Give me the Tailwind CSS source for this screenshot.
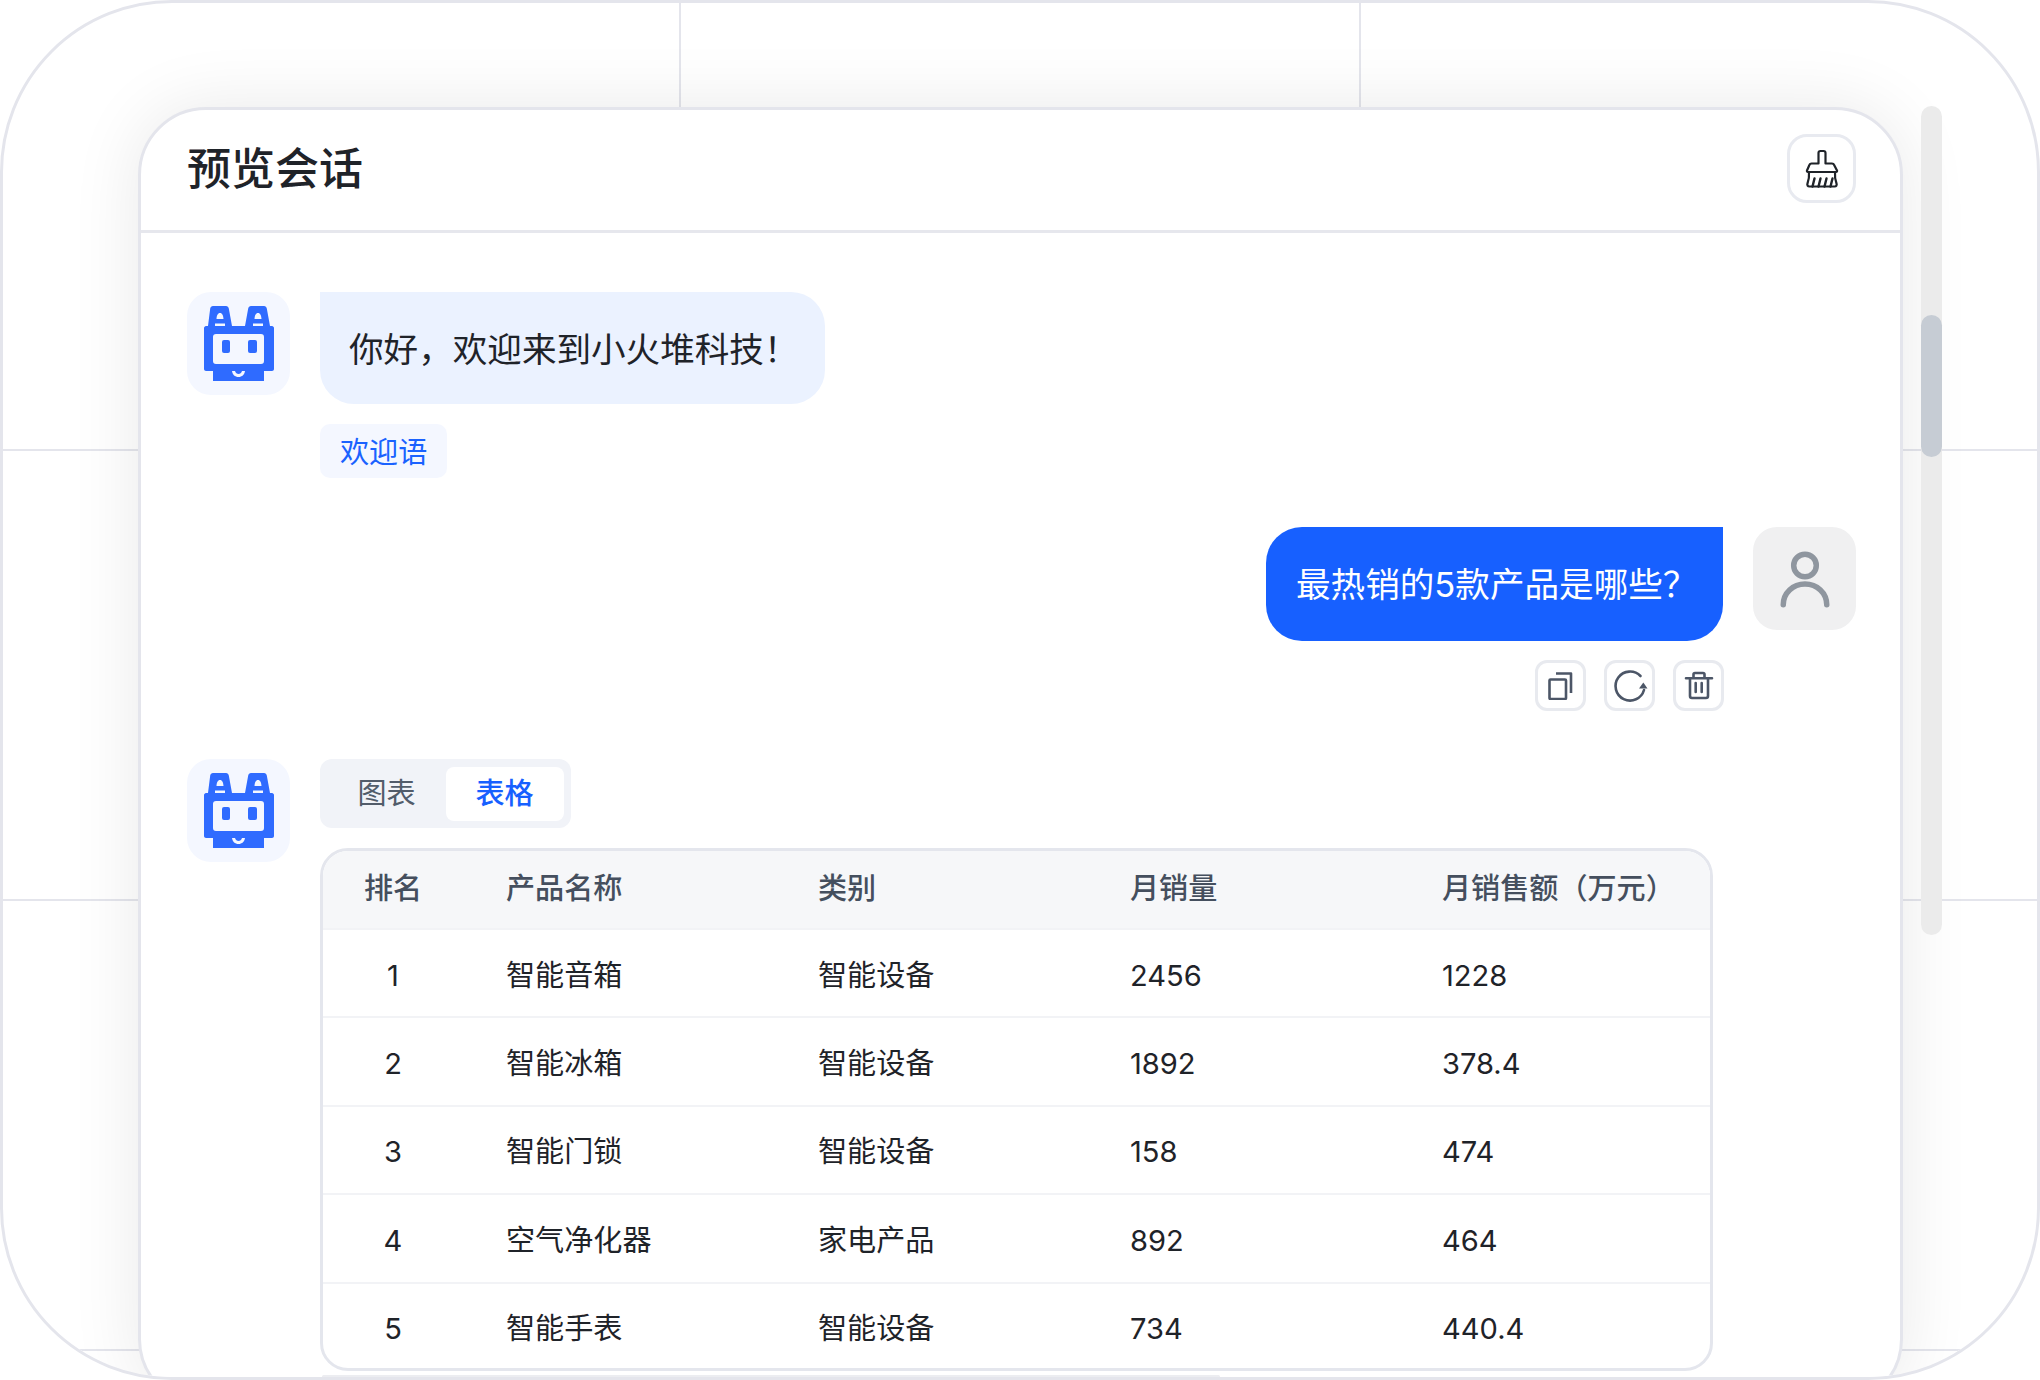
<!DOCTYPE html>
<html><head><meta charset="utf-8"><script src="https://cdn.jsdelivr.net/npm/@tailwindcss/browser@4"></script></head>
<body class="m-0 bg-white">
<div class="relative w-[2040px] h-[1380px] overflow-hidden rounded-[172px] border-[3px] border-[#e4e5ec] bg-white font-['Inter','Noto_Sans_CJK_SC',sans-serif] text-[#1f2329]">
  <div class="absolute left-[-2px] top-[-2px] grid grid-cols-[680px_680px_680px] grid-rows-[450px_450px_450px_30px]">
    <div class="border-r-2 border-b-2 border-[#e4e5ec]"></div><div class="border-r-2 border-b-2 border-[#e4e5ec]"></div><div class="border-b-2 border-[#e4e5ec]"></div>
    <div class="border-r-2 border-b-2 border-[#e4e5ec]"></div><div class="border-r-2 border-b-2 border-[#e4e5ec]"></div><div class="border-b-2 border-[#e4e5ec]"></div>
    <div class="border-r-2 border-b-2 border-[#e4e5ec]"></div><div class="border-r-2 border-b-2 border-[#e4e5ec]"></div><div class="border-b-2 border-[#e4e5ec]"></div>
  </div>
  <div class="absolute left-[135px] top-[104px] h-[1300px] w-[1765px] rounded-[68px] border-[3px] border-[#e4e5ec] bg-white shadow-[0_0_70px_rgba(0,0,0,0.09)]">
    <div class="flex h-[123px] items-center justify-between border-b-[3px] border-[#e6e7ed] pb-[3px] pl-[46px] pr-[44px]">
      <div class="text-[44px] leading-none font-medium text-[#1f2329]">预览会话</div>
      <div class="flex h-[69px] w-[69px] items-center justify-center rounded-[20px] border-[3px] border-[#e8eaf0]">
        <svg class="h-[40px] w-[36px]" viewBox="-2 -1.500 36 40" fill="none" stroke="#1f2329" stroke-width="2.200" stroke-linecap="round" stroke-linejoin="round"><path d="M12.500 13V2.500C12.500 1.200 13.500.5 14.500.5h3c1 0 2 .7 2 2V13h6.500c1 0 1.700.4 2 1.200L31 20c.3.8 0 1.500-1 1.500H2c-1 0-1.300-.7-1-1.500l2.500-5.800c.3-.8 1-1.200 2-1.200Z"/><path d="M3 21.500c.3 4-.2 8-1.500 11.500-.6 1.600.3 3 1.800 3h25.400c1.500 0 2.400-1.400 1.800-3-1.300-3.500-1.800-7.500-1.500-11.500"/><path d="M8.500 28l-2 8M14.500 28l-2 8M20.500 28l-2 8M26.500 28l-2 8" stroke-width="2.400"/></svg>
      </div>
    </div>
    <div class="flex flex-col pl-[46px] pr-[44px] pt-[59px]">
      <div class="flex gap-[30px]">
        <div class="flex h-[103px] w-[103px] shrink-0 items-center justify-center rounded-[24px] bg-[#f4f7ff]">
          <svg class="h-[75px] w-[70px]" viewBox="0 0 70 75" fill="#2f6bff" fill-rule="evenodd"><path d="M9 0h13c1.500 0 2.500 1 2.800 2.500L28 20h13l3.200-17.500C44.500 1 45.500 0 47 0h13c1.500 0 2.500 1 2.800 2.500L66 20h2c1 0 2 1 2 2v41c0 1-1 2-2 2h-8v10H9V65H2c-1 0-2-1-2-2V22c0-1 1-2 2-2h2L6.200 2.500C6.500 1 7.500 0 9 0ZM12 28a3 3 0 0 0-3 3v24a3 3 0 0 0 3 3h45a3 3 0 0 0 3-3V31a3 3 0 0 0-3-3ZM20 34a2 2 0 0 0-2 2v9a2 2 0 0 0 2 2h4a2 2 0 0 0 2-2v-9a2 2 0 0 0-2-2Zm26 0a2 2 0 0 0-2 2v9a2 2 0 0 0 2 2h5a2 2 0 0 0 2-2v-9a2 2 0 0 0-2-2Z"/><path fill="#f4f7ff" d="M12.500 13c.2-3.500 1.300-6 3.500-6s3.300 2.500 3.500 6ZM50.500 13c.2-3.500 1.300-6 3.500-6s3.300 2.500 3.500 6ZM11 17.500h10V20H11ZM49 17.500h10V20H49ZM28 65h3c.5 2 2 3 3.500 3s3-1 3.500-3h3c-.5 3.800-3 6-6.500 6S28.500 68.800 28 65Z"/></svg>
        </div>
        <div class="flex flex-col items-start gap-[20px]">
          <div class="flex h-[112px] w-[505px] items-center rounded-[34px] rounded-tl-none bg-[#ebf2ff] pl-[29px] pt-[3px] text-[34.600px]">你好，欢迎来到小火堆科技！</div>
          <div class="flex h-[54px] items-center rounded-[10px] bg-[#f4f7ff] px-[20px] pt-[3px] text-[29.100px] text-[#1a62ff]">欢迎语</div>
        </div>
      </div>
      <div class="mt-[49px] flex justify-end gap-[30px]">
        <div class="flex flex-col items-end gap-[19px]">
          <div class="flex h-[114px] w-[457px] items-center rounded-[36px] rounded-tr-none bg-[#1760ff] pl-[30px] pt-[2px] text-[34.600px] text-white">最热销的5款产品是哪些？</div>
          <div class="-mr-[1px] flex gap-[18px]">
            <div class="flex h-[51px] w-[51px] items-center justify-center rounded-[12px] border-[3px] border-[#e8eaef]"><svg class="h-[28px] w-[25px]" viewBox="0 0 25 28" fill="none" stroke="#4c5667" stroke-width="2.600" stroke-linejoin="round"><rect x="1.500" y="7.500" width="16.500" height="19.500" rx="1"/><path d="M8 1.500h15V21"/></svg></div>
            <div class="flex h-[51px] w-[51px] items-center justify-center rounded-[12px] border-[3px] border-[#e8eaef]"><svg class="h-[36px] w-[36px]" viewBox="0 0 36 36" fill="none" stroke="#4c5667" stroke-width="2.600" stroke-linecap="round"><path d="M28.500 8A14.500 14.500 0 1 0 32 22"/><path d="M27 20.500h8.500L31.300 14.500Z" fill="#4c5667" stroke="none"/></svg></div>
            <div class="flex h-[51px] w-[51px] items-center justify-center rounded-[12px] border-[3px] border-[#e8eaef]"><svg class="h-[30px] w-[30px]" viewBox="0 0 30 30" fill="none" stroke="#4c5667" stroke-width="2.600" stroke-linecap="round" stroke-linejoin="round"><path d="M2 7.300h26M9.500 7V3.500C9.500 2.500 10 2 11 2h8c1 0 1.500.5 1.500 1.500V7M6 8v17c0 1.500.7 2 2 2h14c1.300 0 2-.5 2-2V8M11.700 12v9M17.700 12v9"/></svg></div>
          </div>
        </div>
        <div class="flex h-[103px] w-[103px] shrink-0 items-center justify-center rounded-[24px] bg-[#f0f0f1]">
          <svg class="h-[60px] w-[52px]" viewBox="0 0 52 60" fill="none" stroke="#8f969f" stroke-width="5.500" stroke-linecap="round"><circle cx="26" cy="16.500" r="11.300"/><path d="M4.250 55.800c0-12 9.700-20.800 21.750-20.800s21.750 8.800 21.750 20.800"/></svg>
        </div>
      </div>
      <div class="mt-[48px] flex gap-[30px]">
        <div class="flex h-[103px] w-[103px] shrink-0 items-center justify-center rounded-[24px] bg-[#f4f7ff]">
          <svg class="h-[75px] w-[70px]" viewBox="0 0 70 75" fill="#2f6bff" fill-rule="evenodd"><path d="M9 0h13c1.500 0 2.500 1 2.800 2.500L28 20h13l3.200-17.500C44.500 1 45.500 0 47 0h13c1.500 0 2.500 1 2.800 2.500L66 20h2c1 0 2 1 2 2v41c0 1-1 2-2 2h-8v10H9V65H2c-1 0-2-1-2-2V22c0-1 1-2 2-2h2L6.200 2.500C6.500 1 7.500 0 9 0ZM12 28a3 3 0 0 0-3 3v24a3 3 0 0 0 3 3h45a3 3 0 0 0 3-3V31a3 3 0 0 0-3-3ZM20 34a2 2 0 0 0-2 2v9a2 2 0 0 0 2 2h4a2 2 0 0 0 2-2v-9a2 2 0 0 0-2-2Zm26 0a2 2 0 0 0-2 2v9a2 2 0 0 0 2 2h5a2 2 0 0 0 2-2v-9a2 2 0 0 0-2-2Z"/><path fill="#f4f7ff" d="M12.500 13c.2-3.500 1.300-6 3.500-6s3.300 2.500 3.500 6ZM50.500 13c.2-3.500 1.300-6 3.500-6s3.300 2.500 3.500 6ZM11 17.500h10V20H11ZM49 17.500h10V20H49ZM28 65h3c.5 2 2 3 3.500 3s3-1 3.500-3h3c-.5 3.800-3 6-6.500 6S28.500 68.800 28 65Z"/></svg>
        </div>
        <div class="flex flex-col items-start">
          <div class="flex h-[69px] rounded-[12px] bg-[#f1f3f8] p-[7.500px]">
            <div class="flex w-[118px] items-center justify-center text-[29.100px] text-[#525c6a]">图表</div>
            <div class="flex w-[118px] items-center justify-center rounded-[8px] bg-white text-[29.100px] font-medium text-[#1760ff]">表格</div>
          </div>
          <div class="mt-[20px] w-[1393px] overflow-hidden rounded-[28px] border-[3px] border-[#e4e6ed] text-[29.100px] text-[#1f2329]">
            <div class="grid h-[77px] grid-cols-[183px_312px_312px_312px_1fr] items-center bg-[#f6f7f9] pb-[1px] font-medium text-[#454f5e]"><div class="w-[140px] text-center">排名</div><div>产品名称</div><div>类别</div><div>月销量</div><div>月销售额（万元）</div></div>
            <div class="grid h-[88px] grid-cols-[183px_312px_312px_312px_1fr] items-center border-t-2 border-[#f2f3f6] pt-[5px]"><div class="w-[140px] text-center">1</div><div>智能音箱</div><div>智能设备</div><div>2456</div><div>1228</div></div>
            <div class="grid h-[88.500px] grid-cols-[183px_312px_312px_312px_1fr] items-center border-t-2 border-[#f2f3f6] pt-[5px]"><div class="w-[140px] text-center">2</div><div>智能冰箱</div><div>智能设备</div><div>1892</div><div>378.4</div></div>
            <div class="grid h-[88.500px] grid-cols-[183px_312px_312px_312px_1fr] items-center border-t-2 border-[#f2f3f6] pt-[5px]"><div class="w-[140px] text-center">3</div><div>智能门锁</div><div>智能设备</div><div>158</div><div>474</div></div>
            <div class="grid h-[88.500px] grid-cols-[183px_312px_312px_312px_1fr] items-center border-t-2 border-[#f2f3f6] pt-[5px]"><div class="w-[140px] text-center">4</div><div>空气净化器</div><div>家电产品</div><div>892</div><div>464</div></div>
            <div class="grid h-[86.500px] grid-cols-[183px_312px_312px_312px_1fr] items-center border-t-2 border-[#f2f3f6] pt-[6px]"><div class="w-[140px] text-center">5</div><div>智能手表</div><div>智能设备</div><div>734</div><div>440.4</div></div>
          </div>
          <div class="ml-[2px] mt-[4px] h-[3px] w-[898px] rounded-full bg-[#ecedf1]"></div>
        </div>
      </div>
    </div>
  </div>
  <div class="absolute left-[1918px] top-[103px] h-[829px] w-[21px] rounded-full bg-[#ebebeb]">
    <div class="absolute left-0 top-[209px] h-[142px] w-[21px] rounded-full bg-[#c6ccd4]"></div>
  </div>
</div>
</body></html>
